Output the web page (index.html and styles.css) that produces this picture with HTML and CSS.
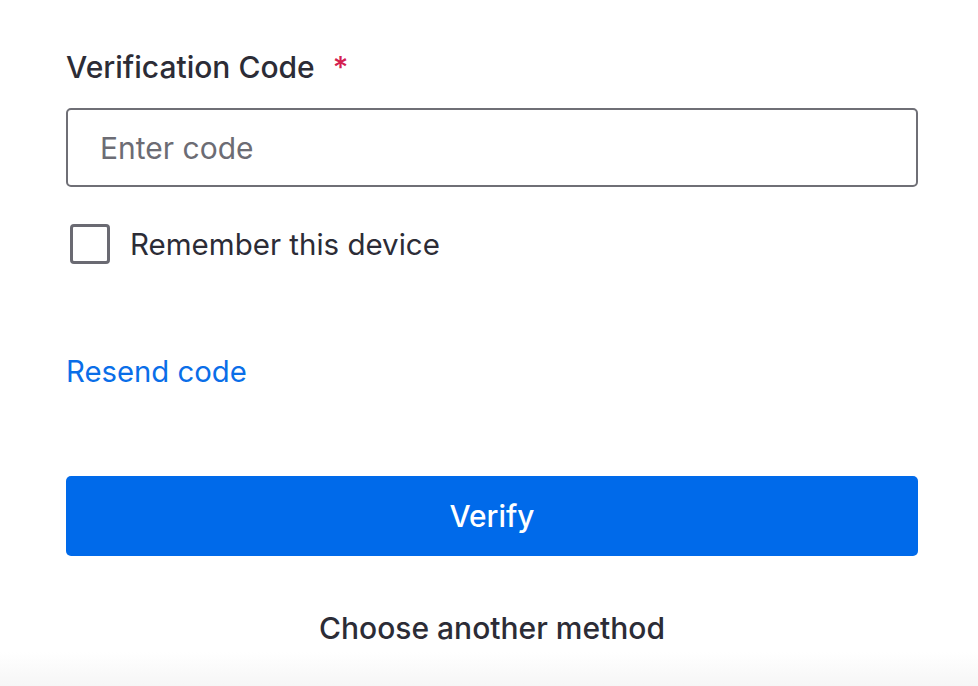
FILE: index.html
```html
<!DOCTYPE html>
<html lang="en">
<head>
<meta charset="utf-8">
<link rel="stylesheet" href="styles.css">
</head>
<body>
<div class="page">
  <form class="form">
    <label class="label" for="code">Verification Code <span class="req">*</span></label>
    <input class="input" id="code" type="text" placeholder="Enter code">
    <label class="check">
      <span class="box"></span>
      <span class="check-text">Remember this device</span>
    </label>
    <a class="link" href="#">Resend code</a>
    <button class="btn" type="button">Verify</button>
    <div class="alt">Choose another method</div>
  </form>
  <div class="fade"></div>
</div>
</body>
</html>
```
FILE: styles.css
```css
html, body {
  margin: 0;
  padding: 0;
  background: #fff;
}
body {
  font-family: Inter, "Noto Sans", sans-serif;
  color: #2c2c36;
}
.page {
  width: 978px;
  height: 686px;
  overflow: hidden;
  position: relative;
}
.form {
  padding: 46px 60px 0 66px;
  display: flex;
  flex-direction: column;
}
.label {
  font-size: 30px;
  line-height: 42px;
  font-weight: 500;
  color: #2c2c36;
}
.req {
  color: #d4204f;
  margin-left: 10px;
}
.input {
  margin-top: 20px;
  box-sizing: border-box;
  width: 852px;
  height: 79px;
  border: 2px solid #6f6f76;
  border-radius: 5px;
  padding: 0 32px;
  font-family: inherit;
  font-size: 30px;
  color: #2c2c36;
  outline: none;
}
.input::placeholder {
  color: #6c6c74;
}
.check {
  margin-top: 37px;
  display: flex;
  align-items: center;
  gap: 20px;
  padding-left: 4px;
}
.box {
  box-sizing: border-box;
  width: 40px;
  height: 40px;
  border: 3px solid #6a6a72;
  border-radius: 4px;
}
.check-text {
  font-size: 29.5px;
  line-height: 40px;
}
.link {
  margin-top: 88px;
  align-self: flex-start;
  font-size: 29.3px;
  line-height: 40px;
  color: #0a6ee8;
  text-decoration: none;
}
.btn {
  margin-top: 84px;
  width: 852px;
  height: 80px;
  border: 0;
  border-radius: 5px;
  background: #006aea;
  color: #fff;
  font-family: inherit;
  font-size: 29.8px;
  font-weight: 500;
}
.alt {
  margin-top: 52px;
  width: 852px;
  text-align: center;
  font-size: 30px;
  line-height: 40px;
  font-weight: 500;
}
.fade {
  position: absolute;
  left: 0;
  right: 0;
  bottom: 0;
  height: 34px;
  background: linear-gradient(#fff, #f6f6f6);
}
```
